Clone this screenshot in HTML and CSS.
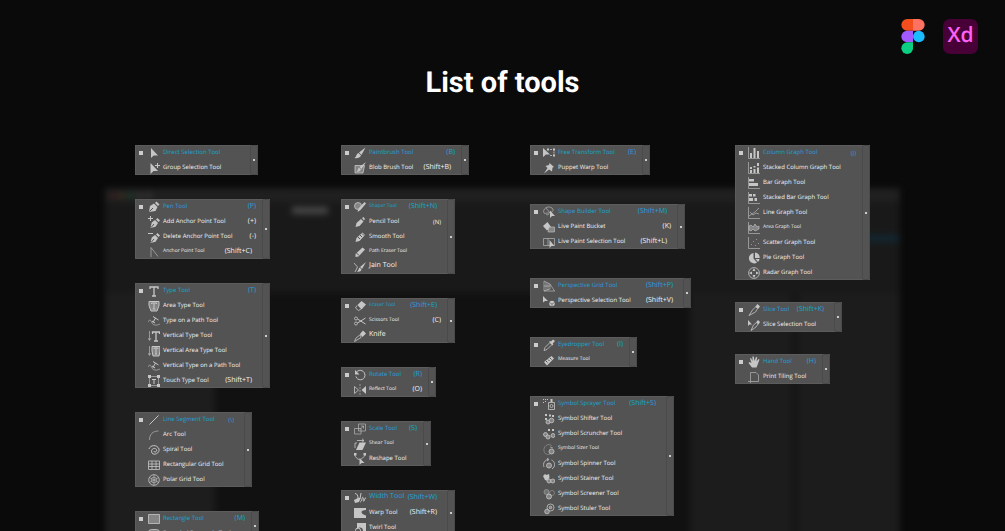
FILE: index.html
```
<!DOCTYPE html>
<html lang="en">
<head>
  <meta charset="UTF-8">
  <meta name="viewport" content="width=device-width, initial-scale=1.0">
  <title>List of tools</title>
  <link rel="stylesheet" href="styles.css">
</head>
<body>
  <svg class="sprite" aria-hidden="true">
    <!-- selection -->
    <symbol id="direct" viewBox="0 0 12 12"><path class="f" d="M3 1v10l2.700-2.500H10z"/></symbol>
    <symbol id="group" viewBox="0 0 12 12"><path class="f" d="M2.500 1v11l3-3H10z"/><path d="M9.500 1v5M7 3.500h5"/></symbol>
    <!-- pen -->
    <symbol id="pen" viewBox="0 0 12 12"><path class="f" d="M1 11l1-6L6 2.500l3.500 3.500-2 4zM7 2l1.500-1.500 3 3L10 5z"/><path class="d" d="M1.500 10.500L5 7"/></symbol>
    <symbol id="pen-add" viewBox="0 0 12 12"><path class="f" d="M2.500 12l1.200-5.500L7 4l3 3-2.500 3.800zM8 3.500L9.500 2 12 4.500 10.500 6z"/><path class="d" d="M3 11.500L6 8"/><path d="M2.500 0v5M0 2.500h5"/></symbol>
    <symbol id="pen-del" viewBox="0 0 12 12"><path class="f" d="M2.500 12l1.200-5.500L7 4l3 3-2.500 3.800zM8 3.500L9.500 2 12 4.500 10.500 6z"/><path class="d" d="M3 11.500L6 8"/><path d="M0 2.500h5"/></symbol>
    <symbol id="anchor" viewBox="0 0 12 12"><path class="t" d="M3 11V1.500L10 10.500"/></symbol>
    <!-- type -->
    <symbol id="type" viewBox="0 0 12 12"><path class="b" d="M2 4V2h8v2M6 2v9M4 11h4"/></symbol>
    <symbol id="type-area" viewBox="0 0 12 12"><path class="h" d="M1 1.500h10v4L9 11H3L1 5.500z"/><path d="M3.500 4V3h5v1M6 3v6M4.500 9h3"/></symbol>
    <symbol id="type-path" viewBox="0 0 12 12"><path class="t" d="M0 7c2-4 3-1 4 1s4 3 8 1"/><path d="M5 1.500l5.500 3.500M7.500 3L5 7.500M4 6l3 2"/></symbol>
    <symbol id="type-vert" viewBox="0 0 12 12"><path class="t" d="M1.500 1v9M0 8l1.500 2.500L3 8"/><path class="b" d="M4.500 4V2h7v2M8 2v9M6 11h4"/></symbol>
    <symbol id="type-vert-area" viewBox="0 0 12 12"><path class="t" d="M1.500 1v9M0 8l1.500 2.500L3 8"/><path class="h" d="M4 1.500h8V6l-1 5H5L4 6z"/><path d="M6 4V3h4v1M8 3v6M7 9h2"/></symbol>
    <symbol id="touch" viewBox="0 0 12 12"><path class="t" d="M1.500 1.500h9v9h-9z"/><path class="f" d="M0 0h3v3H0zM9 0h3v3H9zM0 9h3v3H0zM9 9h3v3H9z"/><path d="M4 4.500h4M6 4.500V9"/></symbol>
    <!-- lines -->
    <symbol id="line" viewBox="0 0 12 12"><path d="M1.500 10.500l9-9"/></symbol>
    <symbol id="arc" viewBox="0 0 12 12"><path class="t" d="M1.500 11C1.500 5 5 2 10.500 2"/></symbol>
    <symbol id="spiral" viewBox="0 0 12 12"><path d="M1 5C2 1 9 0 11 5c1 4-5 7-7 4-2-4 3-6 4.500-3.500C9.500 8 6 9 6 7"/></symbol>
    <symbol id="grid" viewBox="0 0 12 12"><path class="m" d="M.5 2h11v8.500H.5zM4 2v8.500M8 2v8.500M.5 5h11M.5 7.500h11"/></symbol>
    <symbol id="polar" viewBox="0 0 12 12"><circle class="m" cx="6" cy="6" r="5.300"/><circle class="t" cx="6" cy="6" r="2.800"/><path class="t" d="M6 .7v10.600M1.300 3.400l9.400 5.200M10.700 3.400L1.300 8.600"/></symbol>
    <symbol id="rect" viewBox="0 0 12 12"><path class="h m" d="M.5 1.500h11v9H.5z"/></symbol>
    <symbol id="round-rect" viewBox="0 0 12 12"><rect class="h m" x=".5" y="1.500" width="11" height="9" rx="3"/></symbol>
    <!-- brushes -->
    <symbol id="brush" viewBox="0 0 12 12"><path class="f" d="M11.500.5L7.500 8 5 5.500zM4.500 6l2.500 2.500C6 11 3 11.500.5 11c2-.8 1.500-4 4-5z"/></symbol>
    <symbol id="blob" viewBox="0 0 12 12"><path class="h m" d="M1 3.500h9.500L9 11H1z"/><path class="f" d="M12 0L7.500 7 5.500 5zM5 5.500L7 7.500C6 9.500 4 10 2.500 9.500c1.500-.5 1.300-2.800 2.500-4z"/></symbol>
    <symbol id="shaper" viewBox="0 0 12 12"><circle class="h m" cx="4" cy="5" r="3.500"/><path class="f" d="M3.500 11l1-3.500L10.500 1 12 2.500 6.500 9z"/></symbol>
    <symbol id="pencil" viewBox="0 0 12 12"><path class="f" d="M1.500 11l1-4L7 3l2.500 2.500L5.500 10zM8 2l1.500-1L11 3l-1 1.500z"/></symbol>
    <symbol id="smooth" viewBox="0 0 12 12"><path class="f" d="M1.500 11l1-4L8.500 1.500 11 4 5.500 10z"/><path class="d" d="M4 6l2 2M6 4l2 2M8 2.500l2 2"/></symbol>
    <symbol id="path-eraser" viewBox="0 0 12 12"><path class="f" d="M1.500 11V8L8.500 1.500l2.500 2L4.500 10.500z"/><path class="d" d="M2.500 7L5 9.500"/></symbol>
    <symbol id="join" viewBox="0 0 12 12"><path class="m" d="M0 2l3.500 4L1 11"/><path class="f" d="M12 1L8 8 6 6zM5.500 6.500L7.500 8.500c-.5 2-2.500 2.500-4.500 2 1.500-.5 1.500-3 2.500-4z"/></symbol>
    <!-- erasers and cutters -->
    <symbol id="eraser" viewBox="0 0 12 12"><path class="f" d="M7.500 1L12 4.500 7.500 9.500 3.500 5z"/><path class="m" d="M3 5.500L1.500 8l3 2.500L7 9"/></symbol>
    <symbol id="scissors" viewBox="0 0 12 12"><path d="M11.500 3L3.500 8M11.500 9L3.500 4"/><circle class="m" cx="2" cy="3.500" r="1.500"/><circle class="m" cx="2" cy="8.500" r="1.500"/></symbol>
    <symbol id="knife" viewBox="0 0 12 12"><path class="f" d="M6 4l3-3.500 3 3L8.500 7z"/><path class="m" d="M6.500 4.500L2 8 .5 11.500 7 7.500z"/></symbol>
    <!-- transforms -->
    <symbol id="rotate" viewBox="0 0 12 12"><path d="M2.500 3C6-.5 11 2 11 6.500 10.500 12 3 12 2 7.500"/><path class="f" d="M1 1v4.500h4.500z"/></symbol>
    <symbol id="reflect" viewBox="0 0 12 12"><path class="m" d="M.5 2.500v7l4-3.500z"/><path class="f" d="M12 2v8L7.500 6z"/><path class="t dash" d="M6 0v12"/></symbol>
    <symbol id="scale" viewBox="0 0 12 12"><path class="t" d="M4.500 1h7v7h-7zM.5 5.500H7V11H.5zM6 6.500l3.500-3.500M7 3h2.500v2.500"/></symbol>
    <symbol id="shear" viewBox="0 0 12 12"><path class="f" d="M5.500 4.500H12L8.500 12H2z"/><path class="m" d="M1 10V5h2M3 2.500h7M8 .7l2 1.800-2 1.800"/></symbol>
    <symbol id="reshape" viewBox="0 0 12 12"><path class="m" d="M.5 1.500c1 3 3 5 5 5s4-2 6-5"/><path class="f" d="M0 0h2.500v2.500H0zM9.500 0H12v2.500H9.500zM5.500 5v7l2-2h3z"/></symbol>
    <symbol id="width" viewBox="0 0 12 12"><path d="M1 1.500c2 0 3 2 3 5M7 1L6 7M6 10c2 0 2-6 3-4.500S8.500 10 10 9c1-1 0-3 2-3"/><path class="f" d="M0 8l5-2.500 1.500 1L5 10l-4 1z"/></symbol>
    <symbol id="warp" viewBox="0 0 12 12"><path class="f" d="M0 1h12v2C6 3 6 7 12 8.500V11H0z"/></symbol>
    <symbol id="twirl" viewBox="0 0 12 12"><path class="f" d="M3 1h9v10H8c3-4-2-8-5-3.500z"/><circle cx="4" cy="8.500" r="2.500"/></symbol>
    <symbol id="free" viewBox="0 0 12 12"><path class="f" d="M0 1v9l3-2.500h4z"/><path class="m dash" d="M4 2.500h7v6H6"/><path class="f" d="M10 1.500h2v2h-2zM10 7.500h2v2h-2zM4 1.500h2v2H4z"/></symbol>
    <symbol id="puppet" viewBox="0 0 12 12"><path class="f" d="M6.500 1l4.500 4-1.500.5-.5 4L6 7.500 1 11.500 4.500 6 2.500 4 6 3z"/></symbol>
    <symbol id="shape-build" viewBox="0 0 12 12"><path class="t" d="M1 7C-1 3 5-1 9 2c3 3-1 5-4 5s-3 1-4 0zM3 2l4 5M3 8c1 1 2 1 3 0"/><path class="f" d="M7 4.500V12l2-2h3z"/></symbol>
    <symbol id="bucket" viewBox="0 0 12 12"><path class="f" d="M0 5l4.500-4L8 6 4 9.500z"/><path class="h t" d="M6 6h5.500v5H5z"/></symbol>
    <symbol id="live-select" viewBox="0 0 12 12"><path class="t" d="M.5 2.500h11v7H.5zM5 2.500v7"/><path class="f" d="M6.500 4v8l2-2h3z"/></symbol>
    <symbol id="persp" viewBox="0 0 12 12"><path class="t" d="M1 1v10h11M1 1l6 3v5L1 11M1 6h6M3 2v8M5 3v7M7 4l4.500 7"/></symbol>
    <symbol id="persp-select" viewBox="0 0 12 12"><path class="f" d="M0 1v6.500L2 6h3z"/><circle class="f" cx="9" cy="8.500" r="2.800"/><path class="d t" d="M6.200 7.500L9 9l2.800-1.500M9 9v2.500"/></symbol>
    <symbol id="dropper" viewBox="0 0 12 12"><path class="f" d="M6 3l1-1 1 .5L10 .5 12 2 9.800 4.500l.5 1-1 1z"/><path class="m" d="M6.500 4L2 8.500 1 11.500l3-1L8.500 6"/></symbol>
    <symbol id="measure" viewBox="0 0 12 12"><path class="f" d="M1 8l7.500-6L11 4.500 4 11.500z"/><path class="d" d="M3 7l1.500 1.500M5 5.500L6.500 7M7 4l1.500 1.500"/></symbol>
    <!-- symbols -->
    <symbol id="sprayer" viewBox="0 0 12 12"><path class="m" d="M5.500 4.500h6v7h-6z"/><path class="f" d="M7.500 1h2v3h-2zM0 1h1v1H0zM2 1h1v1H2zM4 1h1v1H4zM0 4h1v1H0zM2 3h1v1H2z"/><circle class="m" cx="8.500" cy="8" r="1.500"/></symbol>
    <symbol id="shifter" viewBox="0 0 12 12"><path class="f" d="M2 1h2v2H2zM6 1.500h2v2H6zM9 2h2v2H9zM2 5h2v2H2z"/><circle class="h m" cx="5" cy="9" r="2"/><circle class="h m" cx="8.500" cy="7.500" r="2.300"/></symbol>
    <symbol id="scruncher" viewBox="0 0 12 12"><circle class="h m" cx="2.500" cy="6.500" r="2"/><circle class="h m" cx="5" cy="9" r="2"/><circle class="h m" cx="10" cy="7.500" r="2"/><path class="f" d="M5 1h2v2H5zM9 1h2v2H9z"/></symbol>
    <symbol id="sizer" viewBox="0 0 12 12"><path class="t dim" d="M9 3C5-1 0 4 1 8s5 4 6 3"/><circle class="h m" cx="8.500" cy="8.500" r="2.500"/><path class="t" d="M7 4l3 1"/></symbol>
    <symbol id="spinner" viewBox="0 0 12 12"><circle class="h m" cx="6" cy="7.500" r="2.500"/><path class="m" d="M1 9C-.5 5 2 2 5 1.500M11 9c1.500-3 0-6-2.500-7M4 0l2 1.500L4 3M9 11l2-2"/></symbol>
    <symbol id="stainer" viewBox="0 0 12 12"><path class="f" d="M0 3l2-2 1.500 1L6 1l.5 3L5 8 2 7z"/><circle class="h m" cx="6" cy="8" r="2"/><circle class="h m" cx="9.800" cy="8" r="2"/></symbol>
    <symbol id="screener" viewBox="0 0 12 12"><circle class="h m dim" cx="3.500" cy="4" r="2.500"/><circle class="h m" cx="6" cy="8.500" r="2.500"/><circle class="t dim" cx="9" cy="5" r="2.500"/></symbol>
    <symbol id="styler" viewBox="0 0 12 12"><circle class="m" cx="7.500" cy="4.500" r="3.500"/><circle class="h m" cx="7.500" cy="4.500" r="1.300"/><circle class="h m" cx="4" cy="8.500" r="2.300"/></symbol>
    <!-- graphs -->
    <symbol id="column" viewBox="0 0 12 12"><path class="t" d="M.5 0v11.500H12"/><path class="f" d="M2 6h2v5H2zM5.500 1h2v10h-2zM9 4h2v7H9z"/></symbol>
    <symbol id="stacked" viewBox="0 0 12 12"><path class="t" d="M.5 0v11.500H12"/><path class="f" d="M2 5h2v2H2zM2 8h2v3H2zM5.500 4h2v1.500h-2zM5.500 7h2v4h-2zM9 1h2v3H9zM9 5.500h2V11H9z"/></symbol>
    <symbol id="bar" viewBox="0 0 12 12"><path class="t" d="M.5 0v11.500H12"/><path class="f" d="M1 2h5v2.500H1zM1 6h9v3H1z"/></symbol>
    <symbol id="stacked-bar" viewBox="0 0 12 12"><path class="t" d="M.5 0v11.500H12"/><path class="f" d="M1 2h3v2.500H1zM5 2h2.500v2.500H5zM1 6h4v3H1zM6.500 6H9v3H6.500z"/></symbol>
    <symbol id="line-graph" viewBox="0 0 12 12"><path class="t" d="M.5 0v11.500H12M1 9l3-2 3-2 4-4M2 5l3 3 3-2 3 1"/></symbol>
    <symbol id="area" viewBox="0 0 12 12"><path class="t" d="M.5 0v11.500H12"/><path class="h t" d="M1 4l2-1 2 2 2-3 2 3 2-1v3L9 8 7 9 5 7 3 9 1 8z"/></symbol>
    <symbol id="scatter" viewBox="0 0 12 12"><path class="t" d="M.5 0v11.500H12"/><path class="f dim" d="M3 7h1v1H3zM5 4h1v1H5zM7 8h1v1H7zM8 2h1v1H8zM10 6h1v1h-1z"/></symbol>
    <symbol id="pie" viewBox="0 0 12 12"><path class="f" d="M5.500 1v5.500l3.500 4A5.200 5.200 0 1 1 5.500 1zM7 .5A5 5 0 0 1 11.700 6H7zM7.500 7h4a5 5 0 0 1-1.500 3z"/></symbol>
    <symbol id="radar" viewBox="0 0 12 12"><circle class="m" cx="6" cy="6" r="5.400"/><path class="f" d="M4.500 4l1.500-3 1.500 3zM4.500 8L6 11l1.500-3zM4 4.500L1 6l3 1.500zM8 4.500L11 6 8 7.500z"/></symbol>
    <!-- slice and hand -->
    <symbol id="slice" viewBox="0 0 12 12"><path class="f" d="M7.500 2.500L9.500 0 12 2.500 10 5z"/><path class="m" d="M8 2.500L4.500 6 1 11.500 7.500 8 9.500 4.500z"/></symbol>
    <symbol id="slice-select" viewBox="0 0 12 12"><path class="f" d="M0 1v6l1.500-1.500H4zM8 3.500L10 1l2 2-1.500 2.500z"/><path class="m" d="M8.500 3.500L5.500 6 3 11.500 8 8l2-3"/></symbol>
    <symbol id="hand" viewBox="0 0 12 12"><path class="f" d="M4 11.500L.5 7l1-1L3.500 7 2 2.500l1-.5L4.500 5 4.500.5h1.300L6.500 5 8 1l1.200.3L8.500 5.500 10.500 3l1 .5L9.500 9l-1 2.500z"/></symbol>
    <symbol id="print" viewBox="0 0 12 12"><path class="t" d="M2.500 10V1.500H8L10.500 4v6.500h-8M0 10.500h2.500V12"/></symbol>
  </svg>

  <!-- blurred app window behind the lists -->
  <div class="backdrop" aria-hidden="true">
    <div class="bar"><i class="red"></i><i class="amber"></i><i class="green"></i><i></i><i></i></div>
    <div class="options"><b></b><b class="blue"></b></div>
    <div class="work">
      <div class="side"></div>
      <div class="canvas"></div>
      <div class="dock"><div></div><div></div></div>
    </div>
  </div>

  <main class="page">
    <header class="apps">
      <svg class="figma" viewBox="0 0 24 36" role="img" aria-label="Figma">
        <path fill="#f24e1e" d="M6 0h6v12H6A6 6 0 0 1 6 0z"/>
        <path fill="#ff7262" d="M12 0h6a6 6 0 0 1 0 12h-6z"/>
        <path fill="#a259ff" d="M6 12h6v12H6a6 6 0 0 1 0-12z"/>
        <circle fill="#1abcfe" cx="18" cy="18" r="6"/>
        <path fill="#0acf83" d="M6 24h6v6a6 6 0 1 1-6-6z"/>
      </svg>
      <span class="xd">Xd</span>
    </header>
    <h1>List of tools</h1>

    <div class="columns">
      <div class="column">
        <section class="panel w-123">
          <ul>
            <li><svg><use href="#direct"/></svg><span>Direct Selection Tool</span></li>
            <li><svg><use href="#group"/></svg><span>Group Selection Tool</span></li>
          </ul>
        </section>
        <section class="panel w-135">
          <ul>
            <li><svg><use href="#pen"/></svg><span>Pen Tool</span><kbd>(P)</kbd></li>
            <li><svg><use href="#pen-add"/></svg><span>Add Anchor Point Tool</span><kbd>(+)</kbd></li>
            <li><svg><use href="#pen-del"/></svg><span>Delete Anchor Point Tool</span><kbd>(-)</kbd></li>
            <li><svg><use href="#anchor"/></svg><span class="small">Anchor Point Tool</span><kbd class="combo">(Shift+C)</kbd></li>
          </ul>
        </section>
        <section class="panel w-135">
          <ul>
            <li><svg><use href="#type"/></svg><span>Type Tool</span><kbd>(T)</kbd></li>
            <li><svg><use href="#type-area"/></svg><span>Area Type Tool</span></li>
            <li><svg><use href="#type-path"/></svg><span>Type on a Path Tool</span></li>
            <li><svg><use href="#type-vert"/></svg><span>Vertical Type Tool</span></li>
            <li><svg><use href="#type-vert-area"/></svg><span>Vertical Area Type Tool</span></li>
            <li><svg><use href="#type-path"/></svg><span>Vertical Type on a Path Tool</span></li>
            <li><svg><use href="#touch"/></svg><span>Touch Type Tool</span><kbd class="combo">(Shift+T)</kbd></li>
          </ul>
        </section>
        <section class="panel w-117">
          <ul>
            <li><svg><use href="#line"/></svg><span>Line Segment Tool</span><kbd class="combo tiny">(\)</kbd></li>
            <li><svg><use href="#arc"/></svg><span>Arc Tool</span></li>
            <li><svg><use href="#spiral"/></svg><span>Spiral Tool</span></li>
            <li><svg><use href="#grid"/></svg><span>Rectangular Grid Tool</span></li>
            <li><svg><use href="#polar"/></svg><span>Polar Grid Tool</span></li>
          </ul>
        </section>
        <section class="panel w-124">
          <ul>
            <li><svg><use href="#rect"/></svg><span>Rectangle Tool</span><kbd>(M)</kbd></li>
            <li><svg><use href="#round-rect"/></svg><span>Rounded Rectangle Tool</span></li>
          </ul>
        </section>
      </div>

      <div class="column">
        <section class="panel w-128">
          <ul>
            <li><svg><use href="#brush"/></svg><span>Paintbrush Tool</span><kbd>(B)</kbd></li>
            <li><svg><use href="#blob"/></svg><span>Blob Brush Tool</span><kbd class="combo">(Shift+B)</kbd></li>
          </ul>
        </section>
        <section class="panel w-114">
          <ul>
            <li><svg><use href="#shaper"/></svg><span class="small">Shaper Tool</span><kbd class="combo">(Shift+N)</kbd></li>
            <li><svg><use href="#pencil"/></svg><span>Pencil Tool</span><kbd class="tiny">(N)</kbd></li>
            <li><svg><use href="#smooth"/></svg><span>Smooth Tool</span></li>
            <li><svg><use href="#path-eraser"/></svg><span class="small">Path Eraser Tool</span></li>
            <li><svg><use href="#join"/></svg><span class="large">Jain Tool</span></li>
          </ul>
        </section>
        <section class="panel w-114">
          <ul>
            <li><svg><use href="#eraser"/></svg><span class="small">Eraser Tool</span><kbd class="combo">(Shift+E)</kbd></li>
            <li><svg><use href="#scissors"/></svg><span class="small">Scissors Tool</span><kbd>(C)</kbd></li>
            <li><svg><use href="#knife"/></svg><span class="large">Knife</span></li>
          </ul>
        </section>
        <section class="panel w-95">
          <ul>
            <li><svg><use href="#rotate"/></svg><span>Rotate Tool</span><kbd>(R)</kbd></li>
            <li><svg><use href="#reflect"/></svg><span class="small">Reflect Tool</span><kbd>(O)</kbd></li>
          </ul>
        </section>
        <section class="panel w-90">
          <ul>
            <li><svg><use href="#scale"/></svg><span>Scale Tool</span><kbd>(S)</kbd></li>
            <li><svg><use href="#shear"/></svg><span class="small">Shear Tool</span></li>
            <li><svg><use href="#reshape"/></svg><span>Reshape Tool</span></li>
          </ul>
        </section>
        <section class="panel w-114">
          <ul>
            <li><svg><use href="#width"/></svg><span class="large">Width Tool</span><kbd class="combo">(Shift+W)</kbd></li>
            <li><svg><use href="#warp"/></svg><span>Warp Tool</span><kbd class="combo">(Shift+R)</kbd></li>
            <li><svg><use href="#twirl"/></svg><span>Twirl Tool</span></li>
          </ul>
        </section>
      </div>

      <div class="column loose">
        <section class="panel w-120">
          <ul>
            <li><svg><use href="#free"/></svg><span>Free Transform Tool</span><kbd>(E)</kbd></li>
            <li><svg><use href="#puppet"/></svg><span>Puppet Warp Tool</span></li>
          </ul>
        </section>
        <section class="panel w-155">
          <ul>
            <li><svg><use href="#shape-build"/></svg><span>Shape Builder Tool</span><kbd class="combo">(Shift+M)</kbd></li>
            <li><svg><use href="#bucket"/></svg><span>Live Paint Bucket</span><kbd>(K)</kbd></li>
            <li><svg><use href="#live-select"/></svg><span>Live Paint Selection Tool</span><kbd class="combo">(Shift+L)</kbd></li>
          </ul>
        </section>
        <section class="panel w-161">
          <ul>
            <li><svg><use href="#persp"/></svg><span>Perspective Grid Tool</span><kbd class="combo">(Shift+P)</kbd></li>
            <li><svg><use href="#persp-select"/></svg><span>Perspective Selection Tool</span><kbd class="combo">(Shift+V)</kbd></li>
          </ul>
        </section>
        <section class="panel w-107">
          <ul>
            <li><svg><use href="#dropper"/></svg><span>Eyedropper Tool</span><kbd>(I)</kbd></li>
            <li><svg><use href="#measure"/></svg><span class="small">Measure Tool</span></li>
          </ul>
        </section>
        <section class="panel w-144">
          <ul>
            <li><svg><use href="#sprayer"/></svg><span>Symbol Sprayer Tool</span><kbd class="combo">(Shift+S)</kbd></li>
            <li><svg><use href="#shifter"/></svg><span>Symbol Shifter Tool</span></li>
            <li><svg><use href="#scruncher"/></svg><span>Symbol Scruncher Tool</span></li>
            <li><svg><use href="#sizer"/></svg><span class="small">Symbol Sizer Tool</span></li>
            <li><svg><use href="#spinner"/></svg><span>Symbol Spinner Tool</span></li>
            <li><svg><use href="#stainer"/></svg><span>Symbol Stainer Tool</span></li>
            <li><svg><use href="#screener"/></svg><span>Symbol Screener Tool</span></li>
            <li><svg><use href="#styler"/></svg><span>Symbol Stuler Tool</span></li>
          </ul>
        </section>
      </div>

      <div class="column tight">
        <section class="panel w-135">
          <ul>
            <li><svg><use href="#column"/></svg><span>Column Graph Tool</span><kbd class="tiny">(J)</kbd></li>
            <li><svg><use href="#stacked"/></svg><span>Stacked Column Graph Tool</span></li>
            <li><svg><use href="#bar"/></svg><span>Bar Graph Tool</span></li>
            <li><svg><use href="#stacked-bar"/></svg><span>Stacked Bar Graph Tool</span></li>
            <li><svg><use href="#line-graph"/></svg><span>Line Graph Tool</span></li>
            <li><svg><use href="#area"/></svg><span class="small">Area Graph Tool</span></li>
            <li><svg><use href="#scatter"/></svg><span>Scatter Graph Tool</span></li>
            <li><svg><use href="#pie"/></svg><span>Pie Graph Tool</span></li>
            <li><svg><use href="#radar"/></svg><span>Radar Graph Tool</span></li>
          </ul>
        </section>
        <section class="panel w-107">
          <ul>
            <li><svg><use href="#slice"/></svg><span>Slice Tool</span><kbd class="combo">(Shift+K)</kbd></li>
            <li><svg><use href="#slice-select"/></svg><span>Slice Selection Tool</span></li>
          </ul>
        </section>
        <section class="panel w-95">
          <ul>
            <li><svg><use href="#hand"/></svg><span>Hand Tool</span><kbd>(H)</kbd></li>
            <li><svg><use href="#print"/></svg><span>Print Tiling Tool</span></li>
          </ul>
        </section>
      </div>
    </div>
  </main>
</body>
</html>
```

FILE: styles.css
```
* {
  margin: 0;
  padding: 0;
  box-sizing: border-box;
}

body {
  position: relative;
  height: 100vh;
  overflow: hidden;
  background-color: #0a0a0a;
  color: #f2f2f2;
  font-family: "Open Sans", "Noto Sans", sans-serif;
  text-rendering: geometricPrecision;
}

ul {
  list-style: none;
}

.sprite {
  position: absolute;
  width: 0;
  height: 0;
}

/* backdrop */
.backdrop {
  position: absolute;
  top: 188px;
  right: 105px;
  bottom: -20px;
  left: 105px;
  display: flex;
  flex-direction: column;
  background-color: #1b1b1b;
  filter: blur(3px);
}

.bar {
  display: flex;
  gap: 4px;
  height: 14px;
  padding: 5px;
  background-color: #202020;
}

.bar i {
  width: 5px;
  height: 5px;
  border-radius: 50%;
  background-color: #444;
}

.bar .red {
  background-color: #4a1c1c;
}

.bar .amber {
  background-color: #4a3a1c;
}

.bar .green {
  background-color: #1a5030;
}

.options {
  display: flex;
  justify-content: space-between;
  height: 91px;
  padding: 5px 0 0 187px;
  background-color: #191919;
}

.options b {
  width: 36px;
  height: 7px;
  background-color: #484848;
}

.options .blue {
  margin-top: 28px;
  background-color: #122630;
}

.work {
  display: flex;
  flex: 1;
}

.side {
  width: 110px;
  background-color: #1d1d1d;
}

.canvas {
  flex: 1;
  background-color: #111;
}

.dock {
  display: flex;
  gap: 8px;
  width: 210px;
  background-color: #161616;
}

.dock div {
  flex: 1;
  background-color: #1c1c1c;
}

/* heading */
.page {
  position: relative;
}

.apps {
  display: flex;
  justify-content: flex-end;
  gap: 18px;
  padding: 19px 27px 0;
}

.figma {
  width: 24px;
  height: 35px;
}

.xd {
  width: 35px;
  height: 35px;
  border-radius: 7px;
  background-color: #470137;
  color: #ff61f6;
  font-size: 21px;
  font-weight: 600;
  line-height: 33px;
  text-align: center;
}

h1 {
  margin: 9px 0 42px;
  color: #fff;
  font-family: Roboto, sans-serif;
  font-size: 29px;
  font-weight: 700;
  line-height: 40px;
  text-align: center;
}

/* tool lists */
.columns {
  display: grid;
  grid-template-columns: 206fr 189fr 205fr 270fr;
  padding-left: 135px;
}

.column {
  display: flex;
  flex-direction: column;
  align-items: flex-start;
  gap: 24px;
}

.loose {
  gap: 29px;
}

.tight {
  gap: 22px;
}

.panel {
  display: flex;
  background-color: #535353;
  box-shadow: inset 0 0 0 1px #5c5c5c;
}

.panel ul {
  flex: 1;
}

/* drag strip with its dot */
.panel::after {
  content: "";
  width: 6px;
  border: 1px solid #4a4a4a;
  border-radius: 2px;
  background: linear-gradient(#ccc, #ccc) center / 2px 2px no-repeat;
}

.panel li {
  display: flex;
  align-items: center;
  height: 15px;
  padding-left: 4px;
  white-space: nowrap;
}

.panel li::before {
  content: "";
  width: 4px;
  height: 4px;
}

.panel li:first-child::before {
  background-color: #ccc;
}

.panel svg {
  width: 12px;
  height: 12px;
  margin: 0 3px 0 5px;
  fill: none;
  stroke: #c6c6c6;
}

.panel span {
  padding-bottom: 2px;
  font-size: 6px;
  font-weight: 500;
  line-height: 10px;
}

.panel kbd {
  margin-left: auto;
  padding-right: 6px;
  font-family: inherit;
  font-size: 7px;
  font-weight: 500;
  line-height: 10px;
}

.panel .combo {
  padding-right: 10px;
}

.panel .small {
  font-size: 5px;
}

.panel .tiny {
  font-size: 6px;
}

.panel .large {
  font-size: 7px;
}

.panel li:first-child span,
.panel li:first-child kbd {
  color: #1aa3d8;
}

.w-90 { width: 90px; }
.w-95 { width: 95px; }
.w-107 { width: 107px; }
.w-114 { width: 114px; }
.w-117 { width: 117px; }
.w-120 { width: 120px; }
.w-123 { width: 123px; }
.w-124 { width: 124px; }
.w-128 { width: 128px; }
.w-135 { width: 135px; }
.w-144 { width: 144px; }
.w-155 { width: 155px; }
.w-161 { width: 161px; }

/* icon strokes */
.f {
  fill: #c6c6c6;
  stroke: none;
}

.h {
  fill: #858585;
}

.t {
  stroke-width: .6;
}

.m {
  stroke-width: .8;
}

.b {
  stroke-width: 1.3;
}

.d {
  stroke: #535353;
}

.dim {
  opacity: .6;
}

.dash {
  stroke-dasharray: 2 1;
}
```
